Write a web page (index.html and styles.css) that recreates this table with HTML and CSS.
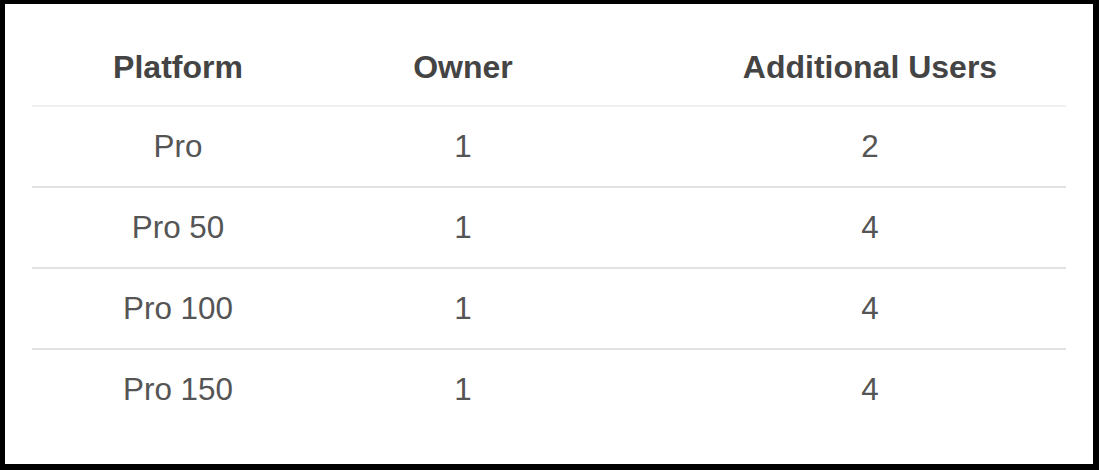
FILE: index.html
```html
<!DOCTYPE html>
<html>
<head>
<meta charset="utf-8">
<link rel="stylesheet" href="styles.css">
</head>
<body>
<div class="frame">
  <table class="plans">
    <colgroup>
      <col class="c1"><col class="c2"><col class="c3">
    </colgroup>
    <thead>
      <tr><th>Platform</th><th>Owner</th><th class="wide">Additional Users</th></tr>
    </thead>
    <tbody>
      <tr><td>Pro</td><td>1</td><td class="wide">2</td></tr>
      <tr><td>Pro 50</td><td>1</td><td class="wide">4</td></tr>
      <tr><td>Pro 100</td><td>1</td><td class="wide">4</td></tr>
      <tr><td>Pro 150</td><td>1</td><td class="wide">4</td></tr>
    </tbody>
  </table>
</div>
</body>
</html>
```
FILE: styles.css
```css
html, body {
  margin: 0;
  padding: 0;
  background: #000;
}
.frame {
  box-sizing: border-box;
  width: 1099px;
  height: 470px;
  background: #fff;
  border-style: solid;
  border-color: #000;
  border-width: 4px 6px 6px 5px;
  padding-left: 27px;
  font-family: "Liberation Sans", Arial, sans-serif;
}
.plans {
  border-collapse: collapse;
  width: 1034px;
  table-layout: fixed;
}
.c1 { width: 292px; }
.c2 { width: 278px; }
.c3 { width: 464px; }
.plans th {
  font-size: 32px;
  font-weight: bold;
  color: #444;
  line-height: 36px;
  padding: 45px 0 20px;
  text-align: center;
  border-bottom: 2px solid #f0f0f0;
}
.plans td {
  font-size: 31.4px;
  color: #555;
  line-height: 36px;
  height: 79px;
  padding: 0;
  text-align: center;
  vertical-align: middle;
  border-bottom: 2px solid #e2e2e2;
}
.plans tbody tr:last-child td {
  border-bottom: none;
}
.plans .wide {
  padding-left: 72px;
}
```
